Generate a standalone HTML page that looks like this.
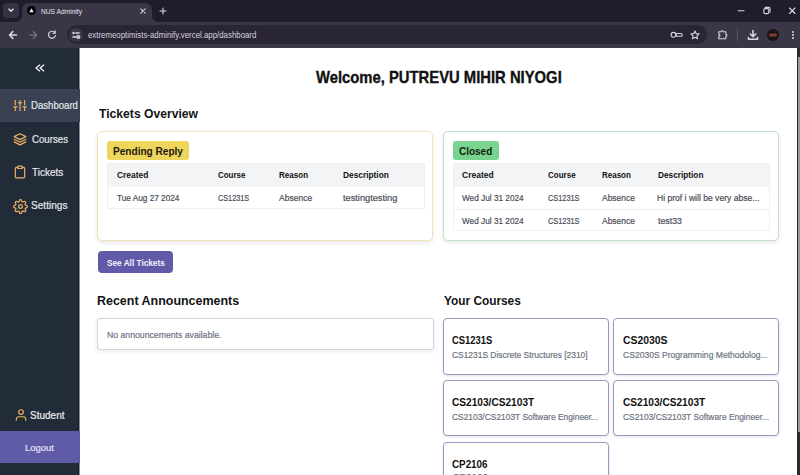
<!DOCTYPE html>
<html><head><meta charset="utf-8">
<style>
*{margin:0;padding:0;box-sizing:border-box}
html,body{width:800px;height:475px;overflow:hidden;background:#fff;font-family:"Liberation Sans",sans-serif}
.a{position:absolute}
.t{position:absolute;white-space:nowrap;line-height:1;transform-origin:0 0}
svg{position:absolute;overflow:visible}
.ic{fill:none;stroke:#e8b062;stroke-width:2;stroke-linecap:round;stroke-linejoin:round}
.cw{fill:none;stroke:#d9d6e0;stroke-width:1.6;stroke-linecap:round;stroke-linejoin:round}
.t.n{-webkit-text-stroke:0.2px currentColor}
.t.h{-webkit-text-stroke:0.35px currentColor}

</style></head><body>
<!-- tab strip -->
<div class="a" style="left:0;top:0;width:800px;height:22px;background:#201c2d"></div>
<div class="a" style="left:16px;top:15.5px;width:6px;height:6px;background:radial-gradient(circle at 0 0,#201c2d 5.5px,#3a3647 6.2px)"></div>
<div class="a" style="left:3px;top:3px;width:16px;height:15px;border-radius:4px;background:#363241"></div>
<div class="a" style="left:22px;top:3px;width:130px;height:20px;border-radius:7px 7px 0 0;background:#3a3647"></div><div class="a" style="left:152px;top:15.5px;width:6px;height:6px;background:radial-gradient(circle at 100% 0,#201c2d 5.5px,#3a3647 6.2px)"></div>
<div class="a" style="left:27px;top:6px;width:9px;height:9px;border-radius:50%;background:#000"></div>
<svg style="left:27px;top:6px" width="9" height="9"><path d="M4.5 2.3L6.6 6.2H2.4Z" fill="#fff"/></svg>
<svg style="left:8px;top:8px" width="6" height="5"><path d="M1 1.2L3 3.2L5 1.2" class="cw" stroke-width="1.3"/></svg>
<svg style="left:140px;top:8px" width="6" height="6"><path d="M0.8 0.8L5.2 5.2M5.2 0.8L0.8 5.2" class="cw" style="stroke-width:1.1"/></svg>
<svg style="left:158px;top:6px" width="10" height="10"><path d="M5 2V8M2 5H8" class="cw" style="stroke-width:1.1"/></svg>
<svg style="left:737px;top:6px" width="10" height="10"><path d="M1.2 4.8H7" class="cw" style="stroke-width:1.1"/></svg>
<svg style="left:762px;top:6px" width="10" height="10"><rect x="1.8" y="2.6" width="5" height="5" rx="1.3" class="cw" style="stroke-width:1.1"/><path d="M3.2 1.4H6.6A1.4 1.4 0 0 1 8 2.8V6.2" class="cw" style="stroke-width:1.1"/></svg>
<svg style="left:788px;top:6px" width="10" height="10"><path d="M1.5 2L7 7.5M7 2L1.5 7.5" class="cw" style="stroke-width:1.1"/></svg>
<!-- toolbar -->
<div class="a" style="left:0;top:21.5px;width:800px;height:26.5px;background:#3a3647"></div>
<svg style="left:8px;top:30px" width="10" height="10"><path d="M8.5 5H1.5M4.8 1.6L1.5 5L4.8 8.4" class="cw" stroke-width="1.2"/></svg>
<svg style="left:28px;top:30px" width="10" height="10"><path d="M1.5 5H8.5M5.2 1.6L8.5 5L5.2 8.4" class="cw" style="stroke:#7d798a;stroke-width:1.1"/></svg>
<svg style="left:47px;top:30px" width="10" height="10"><path d="M8.4 5.6A3.5 3.5 0 1 1 7.6 2.4" class="cw" style="stroke-width:1.2"/><path d="M8.3 0.9V3.3H5.9" class="cw" style="stroke-width:1.1"/></svg>
<div class="a" style="left:67px;top:25px;width:640px;height:19px;border-radius:10px;background:#292536"></div>
<div class="a" style="left:69px;top:27.5px;width:14px;height:14px;border-radius:50%;background:#3a3647"></div>
<svg style="left:71px;top:29.5px" width="10" height="10"><circle cx="2.6" cy="3" r="1.2" fill="#d9d6e0"/><path d="M5 3H8M2 7H5" class="cw" stroke-width="1.1"/><circle cx="7.3" cy="7" r="1.3" class="cw" stroke-width="1.1"/></svg>
<svg style="left:670px;top:30px" width="14" height="10"><circle cx="3.5" cy="4.8" r="2.4" class="cw" style="stroke-width:1.1"/><rect x="5.9" y="3.5" width="6.3" height="2.8" rx="1.4" class="cw" style="stroke-width:1.1"/></svg>
<svg style="left:689.5px;top:30px" width="10" height="10"><path d="M5 0.9L6.2 3.6L9.1 3.9L6.9 5.8L7.5 8.7L5 7.2L2.5 8.7L3.1 5.8L0.9 3.9L3.8 3.6Z" class="cw" style="stroke-width:1.1"/></svg>
<svg style="left:717px;top:29px" width="12" height="12"><path d="M1.8 2.8H4A1.1 1.1 0 0 1 6.2 2.8H8.8V5.2A1.1 1.1 0 0 1 8.8 7.4V9.8H1.8V7.4A1.1 1.1 0 0 0 1.8 5.2Z" class="cw" style="stroke-width:1.1"/></svg>
<div class="a" style="left:737px;top:29px;width:1px;height:12px;background:#5a5666"></div>
<svg style="left:747px;top:29px" width="12" height="12"><path d="M6 1.5V7.5M3.3 5L6 7.7L8.7 5M1.5 8.5V10.3H10.5V8.5" class="cw" stroke-width="1.2"/></svg>
<div class="a" style="left:766.5px;top:28.5px;width:12px;height:12px;border-radius:50%;background:#1b1416"></div>
<svg style="left:766.5px;top:28.5px" width="12" height="12"><path d="M2.5 6.2C3.5 4.8 5 4.8 6 6.2C7 7.6 8.5 7.6 9.5 6.2C8.5 4.8 7 4.8 6 6.2C5 7.6 3.5 7.6 2.5 6.2Z" fill="none" stroke="#9a4a3c" stroke-width="1.1"/></svg>
<div class="a" style="left:792px;top:30.8px;width:1.8px;height:1.8px;border-radius:50%;background:#d9d6e0"></div>
<div class="a" style="left:792px;top:34px;width:1.8px;height:1.8px;border-radius:50%;background:#d9d6e0"></div>
<div class="a" style="left:792px;top:37.2px;width:1.8px;height:1.8px;border-radius:50%;background:#d9d6e0"></div>

<!-- sidebar -->
<div class="a" style="left:0;top:48px;width:80px;height:427px;background:#222b38"></div><div class="a" style="left:78px;top:48px;width:1px;height:427px;background:#1b1f2a"></div><div class="a" style="left:79px;top:48px;width:1px;height:427px;background:#8a8e96"></div>
<svg style="left:35px;top:64.3px" width="10" height="9"><path d="M4.6 0.9L1.0 3.9L4.6 6.9M8.7 0.9L5.1 3.9L8.7 6.9" class="cw" style="stroke:#f1f1f4;stroke-width:1.3"/></svg>
<div class="a" style="left:0;top:88.5px;width:80px;height:33.5px;background:#394152"></div>
<svg style="left:0;top:0" width="30" height="115"><path class="ic" style="stroke-width:1.2;stroke-linecap:butt" d="M15.3 100V105.3M15.3 106.4V111M13.2 106.9H17.4M19.95 100V101.8M19.95 103.2V111M17.85 102.7H22.05M24.6 100V105.3M24.6 106.4V111M22.5 106.9H26.7"/></svg>
<svg style="left:13px;top:131.5px" width="14" height="14" viewBox="0 0 24 24"><g class="ic" style="stroke-width:2.1"><path d="M12 3L22 8L12 13L2 8Z"/><path d="M2 12.5L12 17.5L22 12.5"/><path d="M2 17L12 22L22 17"/></g></svg>
<svg style="left:13.3px;top:165px" width="14" height="14" viewBox="0 0 24 24"><g class="ic" style="stroke-width:2.1"><path d="M16 4h2a2 2 0 0 1 2 2v14a2 2 0 0 1-2 2H6a2 2 0 0 1-2-2V6a2 2 0 0 1 2-2h2"/><rect x="8" y="2" width="8" height="4" rx="1"/></g></svg>
<svg style="left:12.5px;top:198.5px" width="15" height="15" viewBox="0 0 24 24"><g class="ic" stroke-width="2"><circle cx="12" cy="12" r="3"/><path d="M19.4 15a1.65 1.65 0 0 0 .33 1.82l.06.06a2 2 0 0 1 0 2.830 2 2 0 0 1-2.83 0l-.06-.06a1.65 1.65 0 0 0-1.82-.33 1.65 1.65 0 0 0-1 1.51V21a2 2 0 0 1-2 2 2 2 0 0 1-2-2v-.09A1.65 1.65 0 0 0 9 19.4a1.65 1.65 0 0 0-1.82.33l-.06.06a2 2 0 0 1-2.83 0 2 2 0 0 1 0-2.83l.06-.06a1.65 1.65 0 0 0 .33-1.82 1.65 1.65 0 0 0-1.510-1H3a2 2 0 0 1-2-2 2 2 0 0 1 2-2h.09A1.65 1.65 0 0 0 4.6 9a1.65 1.65 0 0 0-.33-1.82l-.06-.06a2 2 0 0 1 0-2.830 2 2 0 0 1 2.83 0l.06.06a1.65 1.65 0 0 0 1.82.33H9a1.65 1.65 0 0 0 1-1.51V3a2 2 0 0 1 2-2 2 2 0 0 1 2 2v.09a1.65 1.65 0 0 0 1 1.51 1.65 1.65 0 0 0 1.820-.33l.06-.06a2 2 0 0 1 2.83 0 2 2 0 0 1 0 2.83l-.06.06a1.65 1.65 0 0 0-.33 1.82V9a1.65 1.65 0 0 0 1.51 1H21a2 2 0 0 1 2 2 2 2 0 0 1-2 2h-.09a1.65 1.65 0 0 0-1.51 1z"/></g></svg>
<svg style="left:14px;top:408px" width="14" height="14" viewBox="0 0 24 24"><g class="ic" style="stroke-width:2.1"><path d="M20 21v-2a4 4 0 0 0-4-4H8a4 4 0 0 0-4 4v2"/><circle cx="12" cy="7" r="4"/></g></svg>
<div class="a" style="left:0;top:431px;width:80px;height:31.5px;background:#605ba6"></div>

<!-- main -->
<div class="a" style="left:80px;top:48px;width:717px;height:427px;background:#fff"></div>
<!-- scrollbar -->
<div class="a" style="left:797px;top:48px;width:3px;height:427px;background:#2a2830"></div>
<div class="a" style="left:798px;top:57px;width:2px;height:375px;background:#9a98a0"></div>

<!-- pending card -->
<div class="a" style="left:96.8px;top:130.8px;width:336.7px;height:110.7px;border:1px solid #f0e3b4;border-radius:5px;background:#fff;box-shadow:0 2px 4px rgba(0,0,0,.09)"></div>
<div class="a" style="left:107.3px;top:140.8px;width:82px;height:19.5px;border-radius:3px;background:#eed55c"></div>
<div class="a" style="left:107.4px;top:163px;width:317.3px;height:45.8px;border:1px solid #eff0f2;background:#fff"></div>
<div class="a" style="left:108.4px;top:164px;width:315.3px;height:22.5px;background:#f3f4f6"></div>
<!-- closed card -->
<div class="a" style="left:442.8px;top:130.8px;width:336.6px;height:110.4px;border:1px solid #bfe2c5;border-radius:5px;background:#fff;box-shadow:0 2px 4px rgba(0,0,0,.09)"></div>
<div class="a" style="left:452.7px;top:140.7px;width:46.3px;height:19.7px;border-radius:3px;background:#78d48e"></div>
<div class="a" style="left:452.5px;top:163px;width:317px;height:68px;border:1px solid #eff0f2;background:#fff"></div>
<div class="a" style="left:453.5px;top:164px;width:315px;height:22.5px;background:#f3f4f6"></div>
<div class="a" style="left:453.7px;top:208.5px;width:315.3px;height:1px;background:#eceef1"></div>

<!-- button -->
<div class="a" style="left:97.75px;top:251px;width:75.5px;height:22px;border-radius:4px;background:#605aa8"></div>
<!-- announcements -->
<div class="a" style="left:97.4px;top:318.4px;width:336.5px;height:32px;border:1px solid #d3d4d8;border-radius:3px;background:#fff;box-shadow:0 2px 4px rgba(0,0,0,.08)"></div>
<!-- course cards -->
<div class="a" style="left:443.2px;top:318.3px;width:165.6px;height:56.6px;border:1px solid #9b98bf;border-radius:4px;background:#fff;box-shadow:0 1px 3px rgba(40,30,90,.12)"></div>
<div class="a" style="left:613.4px;top:318.3px;width:165.6px;height:56.6px;border:1px solid #9b98bf;border-radius:4px;background:#fff;box-shadow:0 1px 3px rgba(40,30,90,.12)"></div>
<div class="a" style="left:443.2px;top:379.6px;width:165.6px;height:56.8px;border:1px solid #9b98bf;border-radius:4px;background:#fff;box-shadow:0 1px 3px rgba(40,30,90,.12)"></div>
<div class="a" style="left:613.4px;top:379.6px;width:165.6px;height:56.8px;border:1px solid #9b98bf;border-radius:4px;background:#fff;box-shadow:0 1px 3px rgba(40,30,90,.12)"></div>
<div class="a" style="left:443.2px;top:441.6px;width:165.6px;height:56.8px;border:1px solid #9b98bf;border-radius:4px;background:#fff;box-shadow:0 1px 3px rgba(40,30,90,.12)"></div>

<div class="t" style="left:40.50px;top:8.00px;font-size:7.27px;color:#e6e3ee;transform:scaleX(0.9144);">NUS Adminify</div>
<div class="t" style="left:88.00px;top:31.00px;font-size:9.30px;color:#d6d2de;transform:scaleX(0.8448);">extremeoptimists-adminify.vercel.app/dashboard</div>
<div class="t n" style="left:30.90px;top:100.00px;font-size:10.50px;color:#e5e7eb;transform:scaleX(0.9131);">Dashboard</div>
<div class="t n" style="left:31.60px;top:134.00px;font-size:10.50px;color:#e5e7eb;transform:scaleX(0.9217);">Courses</div>
<div class="t n" style="left:31.60px;top:167.00px;font-size:10.50px;color:#e5e7eb;transform:scaleX(0.9508);">Tickets</div>
<div class="t n" style="left:31.40px;top:200.00px;font-size:10.50px;color:#e5e7eb;transform:scaleX(0.9608);">Settings</div>
<div class="t n" style="left:30.10px;top:410.00px;font-size:11.05px;color:#eceef2;transform:scaleX(0.9065);">Student</div>
<div class="t n" style="left:25.00px;top:443.00px;font-size:9.74px;color:#e4e2f6;transform:scaleX(0.9687);">Logout</div>
<div class="t h" style="left:315.50px;top:70.00px;font-size:16.60px;color:#111;font-weight:bold;transform:scaleX(0.8924);">Welcome, PUTREVU MIHIR NIYOGI</div>
<div class="t" style="left:98.70px;top:107.00px;font-size:13.08px;color:#141414;font-weight:bold;transform:scaleX(0.9288);">Tickets Overview</div>
<div class="t" style="left:113.00px;top:145.00px;font-size:11.60px;color:#1c1a10;font-weight:bold;transform:scaleX(0.8689);">Pending Reply</div>
<div class="t" style="left:459.30px;top:145.00px;font-size:11.60px;color:#10240f;font-weight:bold;transform:scaleX(0.8607);">Closed</div>
<div class="t" style="left:116.80px;top:171.00px;font-size:9.00px;color:#111;font-weight:bold;transform:scaleX(0.9329);">Created</div>
<div class="t" style="left:217.80px;top:171.00px;font-size:9.00px;color:#111;font-weight:bold;transform:scaleX(0.8838);">Course</div>
<div class="t" style="left:279.00px;top:171.00px;font-size:9.00px;color:#111;font-weight:bold;transform:scaleX(0.8934);">Reason</div>
<div class="t" style="left:342.90px;top:171.00px;font-size:9.00px;color:#111;font-weight:bold;transform:scaleX(0.9263);">Description</div>
<div class="t" style="left:461.80px;top:171.00px;font-size:9.00px;color:#111;font-weight:bold;transform:scaleX(0.9452);">Created</div>
<div class="t" style="left:548.20px;top:171.00px;font-size:9.00px;color:#111;font-weight:bold;transform:scaleX(0.8903);">Course</div>
<div class="t" style="left:602.00px;top:171.00px;font-size:9.00px;color:#111;font-weight:bold;transform:scaleX(0.8872);">Reason</div>
<div class="t" style="left:657.60px;top:171.00px;font-size:9.00px;color:#111;font-weight:bold;transform:scaleX(0.9183);">Description</div>
<div class="t n" style="left:116.80px;top:193.00px;font-size:9.60px;color:#4a4d55;transform:scaleX(0.8580);">Tue Aug 27 2024</div>
<div class="t n" style="left:217.80px;top:193.00px;font-size:9.60px;color:#4a4d55;transform:scaleX(0.7573);">CS1231S</div>
<div class="t n" style="left:279.00px;top:193.00px;font-size:9.60px;color:#4a4d55;transform:scaleX(0.8919);">Absence</div>
<div class="t n" style="left:342.90px;top:193.00px;font-size:9.60px;color:#4a4d55;transform:scaleX(0.9609);">testingtesting</div>
<div class="t n" style="left:461.80px;top:193.00px;font-size:9.60px;color:#4a4d55;transform:scaleX(0.8583);">Wed Jul 31 2024</div>
<div class="t n" style="left:548.20px;top:193.00px;font-size:9.60px;color:#4a4d55;transform:scaleX(0.7672);">CS1231S</div>
<div class="t n" style="left:602.00px;top:193.00px;font-size:9.60px;color:#4a4d55;transform:scaleX(0.8811);">Absence</div>
<div class="t n" style="left:656.60px;top:193.00px;font-size:9.60px;color:#4a4d55;transform:scaleX(0.8933);">Hi prof i will be very abse...</div>
<div class="t n" style="left:461.80px;top:216.00px;font-size:9.60px;color:#4a4d55;transform:scaleX(0.8583);">Wed Jul 31 2024</div>
<div class="t n" style="left:548.20px;top:216.00px;font-size:9.60px;color:#4a4d55;transform:scaleX(0.7672);">CS1231S</div>
<div class="t n" style="left:602.00px;top:216.00px;font-size:9.60px;color:#4a4d55;transform:scaleX(0.8811);">Absence</div>
<div class="t n" style="left:657.60px;top:216.00px;font-size:9.60px;color:#4a4d55;transform:scaleX(0.9148);">test33</div>
<div class="t" style="left:106.60px;top:258.00px;font-size:9.59px;color:#f3f2fb;font-weight:bold;transform:scaleX(0.8613);">See All Tickets</div>
<div class="t" style="left:97.00px;top:294.00px;font-size:13.66px;color:#141414;font-weight:bold;transform:scaleX(0.9126);">Recent Announcements</div>
<div class="t n" style="left:106.60px;top:330.00px;font-size:9.59px;color:#6b7280;transform:scaleX(0.9067);">No announcements available.</div>
<div class="t" style="left:443.75px;top:294.00px;font-size:13.08px;color:#141414;font-weight:bold;transform:scaleX(0.9052);">Your Courses</div>
<div class="t" style="left:452.40px;top:335.00px;font-size:11.48px;color:#111;font-weight:bold;transform:scaleX(0.8214);">CS1231S</div>
<div class="t n" style="left:452.40px;top:350.00px;font-size:9.88px;color:#6b7280;transform:scaleX(0.8518);">CS1231S Discrete Structures [2310]</div>
<div class="t" style="left:623.00px;top:335.00px;font-size:11.48px;color:#111;font-weight:bold;transform:scaleX(0.9061);">CS2030S</div>
<div class="t n" style="left:623.00px;top:350.00px;font-size:9.88px;color:#6b7280;transform:scaleX(0.8668);">CS2030S Programming Methodolog...</div>
<div class="t" style="left:452.40px;top:397.00px;font-size:11.48px;color:#111;font-weight:bold;transform:scaleX(0.8831);">CS2103/CS2103T</div>
<div class="t n" style="left:452.40px;top:412.00px;font-size:9.88px;color:#6b7280;transform:scaleX(0.8511);">CS2103/CS2103T Software Engineer...</div>
<div class="t" style="left:623.00px;top:397.00px;font-size:11.48px;color:#111;font-weight:bold;transform:scaleX(0.8831);">CS2103/CS2103T</div>
<div class="t n" style="left:623.00px;top:412.00px;font-size:9.88px;color:#6b7280;transform:scaleX(0.8511);">CS2103/CS2103T Software Engineer...</div>
<div class="t" style="left:452.40px;top:459.00px;font-size:11.48px;color:#111;font-weight:bold;transform:scaleX(0.8572);">CP2106</div>
<div class="t n" style="left:452.40px;top:472.00px;font-size:9.90px;color:#6b7280;">CP2106</div>
</body></html>
